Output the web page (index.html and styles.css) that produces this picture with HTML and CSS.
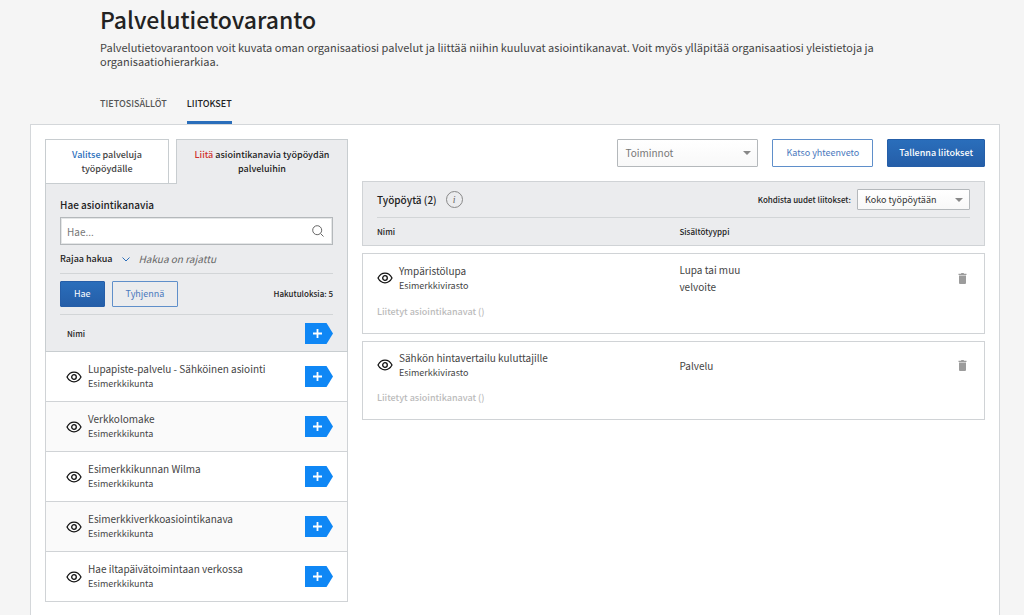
FILE: index.html
```html
<!DOCTYPE html>
<html lang="fi">
<head>
<meta charset="utf-8">
<meta name="viewport" content="width=device-width, initial-scale=1">
<title>Palvelutietovaranto</title>
<link rel="stylesheet" href="styles.css">
</head>
<body>
<svg class="defs" aria-hidden="true">
  <symbol id="eye" viewBox="0 0 16 12">
    <path d="M1 6C2.6 3 5.1 1.2 8 1.2S13.400 3 15 6C13.400 9 10.900 10.800 8 10.800S2.600 9 1 6Z" fill="none" stroke="currentColor" stroke-width="1.300" stroke-linejoin="round"/>
    <circle cx="8" cy="6" r="2.300" fill="none" stroke="currentColor" stroke-width="1.300"/>
  </symbol>
  <symbol id="add" viewBox="0 0 28 21">
    <path d="M0 0H21.500L28 10.500L21.500 21H0Z" fill="#0f87f5"/>
    <path d="M12.500 6V15M8 10.500H17" stroke="#fff" stroke-width="1.800" fill="none"/>
  </symbol>
  <symbol id="trash" viewBox="0 0 8 11">
    <path d="M0 .8H2.300L3 0H5L5.700 .8H8V2H0ZM.5 2.500H7.500V10Q7.500 11 6.500 11H1.500Q.5 11 .5 10Z" fill="#9c9c9c"/>
  </symbol>
</svg>

<header class="page-header">
  <h1 class="title">Palvelutietovaranto</h1>
  <p class="intro">Palvelutietovarantoon voit kuvata oman organisaatiosi palvelut ja liittää niihin kuuluvat asiointikanavat. Voit myös ylläpitää organisaatiosi yleistietoja ja organisaatiohierarkiaa.</p>
  <nav class="main-tabs">
    <a class="main-tab" href="#">TIETOSISÄLLÖT</a>
    <a class="main-tab main-tab-active" href="#">LIITOKSET</a>
  </nav>
</header>

<main class="panel">
  <section class="sidebar">
    <div class="side-tabs">
      <button class="side-tab" type="button"><span class="blue">Valitse</span> palveluja työpöydälle</button>
      <button class="side-tab side-tab-active" type="button"><span class="red">Liitä</span> asiointikanavia työpöydän palveluihin</button>
    </div>
    <form class="search">
      <label class="search-label" for="q">Hae asiointikanavia</label>
      <div class="search-box">
        <input class="search-input" id="q" type="text" placeholder="Hae...">
        <svg class="search-icon" viewBox="0 0 12 12" aria-hidden="true"><circle cx="5.200" cy="5.200" r="4.500"/><path d="M8.500 8.500L11.500 11.500"/></svg>
      </div>
      <div class="filter">
        <button class="filter-toggle" type="button">Rajaa hakua
          <svg class="chevron" viewBox="0 0 8 5" aria-hidden="true"><path d="M.5 .5L4 4L7.500 .5"/></svg>
        </button>
        <em class="filter-state">Hakua on rajattu</em>
      </div>
      <div class="actions">
        <button class="btn btn-primary" type="button">Hae</button>
        <button class="btn" type="button">Tyhjennä</button>
        <span class="count">Hakutuloksia: 5</span>
      </div>
      <div class="list-head">
        <span>Nimi</span>
        <button class="add" type="button" aria-label="Lisää kaikki"><svg class="add-icon"><use href="#add"/></svg></button>
      </div>
    </form>
    <ul class="results">
      <li class="result">
        <svg class="eye"><use href="#eye"/></svg>
        <div class="item"><div class="name">Lupapiste-palvelu - Sähköinen asiointi</div><div class="org">Esimerkkikunta</div></div>
        <button class="add" type="button" aria-label="Lisää"><svg class="add-icon"><use href="#add"/></svg></button>
      </li>
      <li class="result">
        <svg class="eye"><use href="#eye"/></svg>
        <div class="item"><div class="name">Verkkolomake</div><div class="org">Esimerkkikunta</div></div>
        <button class="add" type="button" aria-label="Lisää"><svg class="add-icon"><use href="#add"/></svg></button>
      </li>
      <li class="result">
        <svg class="eye"><use href="#eye"/></svg>
        <div class="item"><div class="name">Esimerkkikunnan Wilma</div><div class="org">Esimerkkikunta</div></div>
        <button class="add" type="button" aria-label="Lisää"><svg class="add-icon"><use href="#add"/></svg></button>
      </li>
      <li class="result">
        <svg class="eye"><use href="#eye"/></svg>
        <div class="item"><div class="name">Esimerkkiverkkoasiointikanava</div><div class="org">Esimerkkikunta</div></div>
        <button class="add" type="button" aria-label="Lisää"><svg class="add-icon"><use href="#add"/></svg></button>
      </li>
      <li class="result">
        <svg class="eye"><use href="#eye"/></svg>
        <div class="item"><div class="name">Hae iltapäivätoimintaan verkossa</div><div class="org">Esimerkkikunta</div></div>
        <button class="add" type="button" aria-label="Lisää"><svg class="add-icon"><use href="#add"/></svg></button>
      </li>
    </ul>
  </section>

  <section class="desk">
    <div class="toolbar">
      <div class="select-wrap">
        <select class="select select-large" aria-label="Toiminnot"><option>Toiminnot</option></select>
        <svg class="caret" viewBox="0 0 8 4" aria-hidden="true"><path d="M0 0H8L4 4Z"/></svg>
      </div>
      <button class="btn btn-large" type="button">Katso yhteenveto</button>
      <button class="btn btn-large btn-primary btn-strong" type="button">Tallenna liitokset</button>
    </div>
    <div class="desk-head">
      <div class="desk-top">
        <h2 class="desk-title">Työpöytä (2)</h2>
        <button class="info" type="button" aria-label="Ohje">i</button>
        <label class="target-label" for="target">Kohdista uudet liitokset:</label>
        <div class="select-wrap">
          <select class="select select-small" id="target"><option>Koko työpöytään</option></select>
          <svg class="caret" viewBox="0 0 8 4" aria-hidden="true"><path d="M0 0H8L4 4Z"/></svg>
        </div>
      </div>
      <div class="columns column-names"><span>Nimi</span><span>Sisältötyyppi</span></div>
    </div>
    <article class="card">
      <div class="columns card-row">
        <div class="service">
          <svg class="eye"><use href="#eye"/></svg>
          <div class="item"><div class="name">Ympäristölupa</div><div class="org">Esimerkkivirasto</div></div>
        </div>
        <div class="type">Lupa tai muu velvoite</div>
        <button class="remove" type="button" aria-label="Poista"><svg class="trash"><use href="#trash"/></svg></button>
      </div>
      <div class="linked">Liitetyt asiointikanavat ()</div>
    </article>
    <article class="card">
      <div class="columns card-row">
        <div class="service">
          <svg class="eye"><use href="#eye"/></svg>
          <div class="item"><div class="name">Sähkön hintavertailu kuluttajille</div><div class="org">Esimerkkivirasto</div></div>
        </div>
        <div class="type">Palvelu</div>
        <button class="remove" type="button" aria-label="Poista"><svg class="trash"><use href="#trash"/></svg></button>
      </div>
      <div class="linked">Liitetyt asiointikanavat ()</div>
    </article>
  </section>
</main>
</body>
</html>
```
FILE: styles.css
```css
* { box-sizing: border-box; }
html { height: 100%; }
body {
  margin: 0;
  min-height: 100%;
  display: flex;
  flex-direction: column;
  background: #f5f5f5;
  color: #444;
  font: 10px/14px "Noto Sans CJK JP", "Noto Sans", sans-serif;
}
button, input, select { font: inherit; color: inherit; margin: 0; }
button { padding: 0; border: 0; background: none; }
svg { display: block; flex: none; }
.defs { position: absolute; width: 0; height: 0; }

.page-header { padding: 3px 100px 0; }
.title {
  margin: 0 0 5px;
  color: #222;
  font-size: 23px;
  line-height: 32px;
  font-weight: 500;
}
.intro { margin: 0; font-size: 11px; line-height: 14px; }
.main-tabs { display: flex; gap: 20px; margin-top: 29px; }
.main-tab {
  padding-bottom: 10px;
  border-bottom: 3px solid transparent;
  color: #555;
  font-size: 9px;
  line-height: 14px;
  font-weight: 500;
  text-decoration: none;
}
.main-tab-active { color: #222; border-color: #2a6ebb; }

.panel {
  flex: 1;
  display: flex;
  align-items: flex-start;
  gap: 14px;
  margin: 0 24px 0 30px;
  padding: 14px;
  background: #fff;
  border: 1px solid #d4d7da;
  border-bottom: 0;
}

.sidebar { flex: 0 0 303px; }
.side-tabs { display: flex; gap: 7px; }
.side-tab {
  flex: 1;
  padding: 8px 24px;
  height: 44px;
  background: #fff;
  border: 1px solid #c8cdd0;
  border-bottom: 0;
  color: #444;
  font-size: 9px;
  line-height: 14px;
  font-weight: 500;
}
.side-tab-active {
  flex: 0 0 172px;
  position: relative;
  height: 45px;
  margin-bottom: -1px;
  padding: 8px 14px;
  background: #ebecee;
  color: #222;
}
.blue { color: #2a6ebb; }
.red { color: #d0312d; }

.search {
  padding: 14px 14px 0;
  background: #ebecee;
  border: 1px solid #c8cdd0;
  color: #222;
}
.search-label { display: block; font-weight: 500; }
.search-box {
  display: flex;
  align-items: center;
  margin-top: 5px;
  padding: 0 8px 0 6px;
  background: #fff;
  border: 1px solid #b4b8bb;
  box-shadow: inset 0 0 0 1px #e4e6e7;
}
.search-input {
  flex: 1;
  min-width: 0;
  height: 26px;
  padding: 0;
  border: 0;
  outline: 0;
  background: none;
}
.search-input::placeholder { color: #777; opacity: 1; }
.search-icon, .chevron { fill: none; stroke: #666; }
.search-icon { width: 12px; height: 12px; }
.filter {
  display: flex;
  align-items: center;
  gap: 9px;
  padding: 7px 0;
  border-bottom: 1px solid #d2d5d7;
}
.filter-toggle {
  display: flex;
  align-items: center;
  gap: 9px;
  font-size: 9px;
  font-weight: 500;
}
.chevron { width: 8px; height: 5px; stroke: #2a6ebb; }
.filter-state { color: #666; }
.actions {
  display: flex;
  align-items: center;
  gap: 7px;
  padding: 7px 0;
  border-bottom: 1px solid #d2d5d7;
}
.count { margin-left: auto; font-size: 8px; font-weight: 500; }
.btn {
  height: 26px;
  padding: 0 13px;
  border: 1px solid #5f8fca;
  border-radius: 1px;
  background: #fff;
  color: #4a78bd;
  font-size: 9px;
}
.actions .btn:not(.btn-primary) { background: none; }
.btn-large { height: 28px; }
.btn-primary { background: linear-gradient(#2a6ebb, #255ea8); border-color: #255ea8; color: #fff; }
.btn-strong { padding: 0 11px; font-weight: 500; }
.list-head {
  display: flex;
  align-items: center;
  justify-content: space-between;
  padding: 8px 0 7px 7px;
  font-size: 8px;
  font-weight: 500;
}
.add-icon { width: 28px; height: 21px; }

.results { margin: 0; padding: 0; list-style: none; }
.result {
  display: flex;
  align-items: center;
  height: 50px;
  padding: 0 14px 0 20px;
  border: 1px solid #d0d3d6;
  border-top: 0;
}
.result:nth-child(even) { background: #fafafa; }
.eye { width: 16px; height: 12px; margin-right: 6px; color: #111; }
.item { flex: 1; }
.name { line-height: 14px; }
.org { font-size: 9px; line-height: 15px; }

.desk { flex: 1; min-width: 0; }
.toolbar {
  display: flex;
  justify-content: flex-end;
  gap: 14px;
  margin-bottom: 14px;
}
.select-wrap { position: relative; }
.select {
  display: block;
  appearance: none;
  padding: 0 7px;
  border: 1px solid #b4b8bb;
  border-radius: 1px;
  background: linear-gradient(#fff, #f8f8f8);
}
.select-large { width: 141px; height: 28px; color: #777; }
.select-small { width: 113px; height: 21px; color: #333; font-size: 9px; }
.caret {
  position: absolute;
  right: 7px;
  top: calc(50% - 2px);
  width: 8px;
  height: 4px;
  fill: #888;
}
.desk-head {
  padding: 0 14px;
  background: #ebecee;
  border: 1px solid #d0d3d6;
  color: #222;
}
.desk-top {
  display: flex;
  align-items: center;
  padding: 7px 0;
  border-bottom: 1px solid #d2d5d7;
}
.desk-title { margin: 0 9px 0 0; font-size: 10px; line-height: 14px; font-weight: 500; }
.info {
  width: 17px;
  height: 17px;
  border: 1px solid #888;
  border-radius: 50%;
  color: #666;
  font: italic 10px/14px "Liberation Serif", serif;
}
.target-label { margin: 0 6px 0 auto; font-size: 8px; font-weight: 500; }
.columns {
  display: grid;
  grid-template-columns: 51% 13% 1fr;
  align-items: center;
}
.column-names { padding: 7px 0 6px; font-size: 8px; font-weight: 500; }
.card {
  margin-top: 7px;
  padding: 7px 14px 14px;
  border: 1px solid #d0d3d6;
}
.card-row { min-height: 32px; }
.service { display: flex; align-items: center; }
.type { line-height: 17px; }
.remove { justify-self: end; padding: 0 3px; }
.trash { width: 9px; height: 11px; }
.linked { margin-top: 10px; color: #bbb; font-size: 9px; font-weight: 500; }
```
